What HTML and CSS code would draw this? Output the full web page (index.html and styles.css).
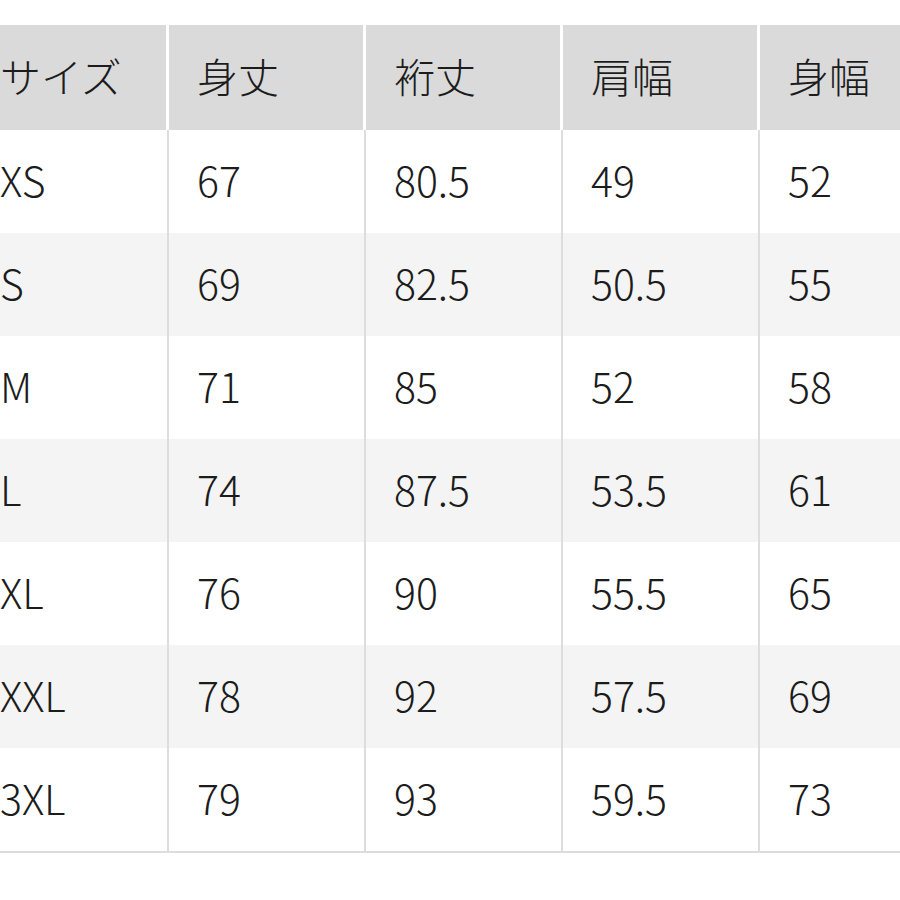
FILE: index.html
```html
<!DOCTYPE html>
<html lang="ja">
<head>
<meta charset="utf-8">
<link rel="stylesheet" href="styles.css">
</head>
<body>
<table class="size-table">
  <thead>
    <tr><th>サイズ</th><th>身丈</th><th>裄丈</th><th>肩幅</th><th>身幅</th></tr>
  </thead>
  <tbody>
    <tr><td>XS</td><td>67</td><td>80.5</td><td>49</td><td>52</td></tr>
    <tr><td>S</td><td>69</td><td>82.5</td><td>50.5</td><td>55</td></tr>
    <tr><td>M</td><td>71</td><td>85</td><td>52</td><td>58</td></tr>
    <tr><td>L</td><td>74</td><td>87.5</td><td>53.5</td><td>61</td></tr>
    <tr><td>XL</td><td>76</td><td>90</td><td>55.5</td><td>65</td></tr>
    <tr><td>XXL</td><td>78</td><td>92</td><td>57.5</td><td>69</td></tr>
    <tr><td>3XL</td><td>79</td><td>93</td><td>59.5</td><td>73</td></tr>
  </tbody>
</table>
</body>
</html>
```
FILE: styles.css
```css
html, body {
  margin: 0;
  padding: 0;
  background: #ffffff;
  overflow: hidden;
}
body {
  width: 900px;
  height: 900px;
  font-family: "Noto Sans CJK JP", "Noto Sans", sans-serif;
  font-weight: 300;
  color: #1c1c1c;
}
.size-table {
  margin-top: 25px;
  margin-left: -28px;
  width: 985px;
  table-layout: fixed;
  border-collapse: separate;
  border-spacing: 0;
  border-bottom: 2px solid #dcdcdc;
}
.size-table th,
.size-table td {
  width: 197px;
  box-sizing: border-box;
  padding: 0 0 4px 28px;
  text-align: left;
  font-size: 41px;
  font-weight: 300;
  line-height: 1;
  white-space: nowrap;
}
.size-table th {
  height: 105px;
  background: #dadada;
  border-right: 3px solid #ffffff;
}
.size-table td {
  height: 103px;
  border-right: 2px solid #dddddd;
}
.size-table tbody tr:nth-child(even) td {
  background: #f4f4f4;
}
```
